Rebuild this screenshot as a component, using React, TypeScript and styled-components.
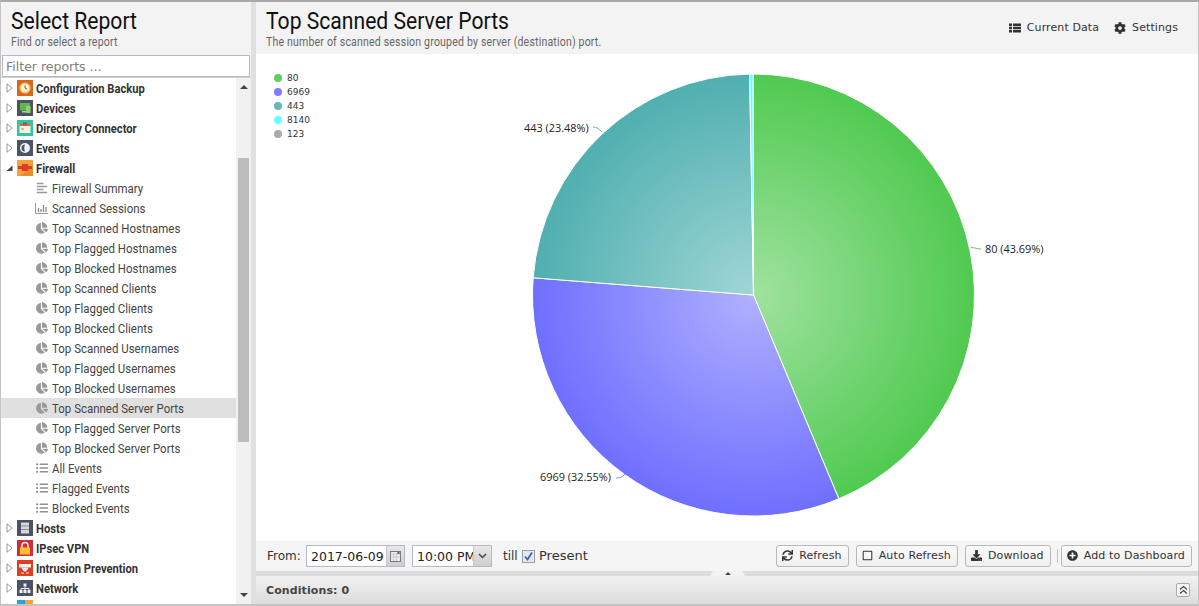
import React from "react";
import styled, { createGlobalStyle } from "styled-components";
import {
  FaChartPie,
  FaListUl,
  FaAlignLeft,
  FaSync,
  FaRegSquare,
  FaDownload,
  FaPlusCircle,
  FaCog,
} from "react-icons/fa";

const GlobalStyle = createGlobalStyle`
  html, body {
    margin: 0;
    padding: 0;
    overflow: hidden;
    background: #fff;
    font-family: "DejaVu Sans", sans-serif;
  }
`;

type LeafKind = "summary" | "bars" | "pie" | "list";

const leaves: { label: string; kind: LeafKind; selected?: boolean }[] = [
  { label: "Firewall Summary", kind: "summary" },
  { label: "Scanned Sessions", kind: "bars" },
  { label: "Top Scanned Hostnames", kind: "pie" },
  { label: "Top Flagged Hostnames", kind: "pie" },
  { label: "Top Blocked Hostnames", kind: "pie" },
  { label: "Top Scanned Clients", kind: "pie" },
  { label: "Top Flagged Clients", kind: "pie" },
  { label: "Top Blocked Clients", kind: "pie" },
  { label: "Top Scanned Usernames", kind: "pie" },
  { label: "Top Flagged Usernames", kind: "pie" },
  { label: "Top Blocked Usernames", kind: "pie" },
  { label: "Top Scanned Server Ports", kind: "pie", selected: true },
  { label: "Top Flagged Server Ports", kind: "pie" },
  { label: "Top Blocked Server Ports", kind: "pie" },
  { label: "All Events", kind: "list" },
  { label: "Flagged Events", kind: "list" },
  { label: "Blocked Events", kind: "list" },
];

// app icons of the tree groups
const GroupIcon = ({ name }: { name: string }) => {
  switch (name) {
    case "backup":
      return (
        <svg width="16" height="16" viewBox="0 0 16 16">
          <rect width="16" height="16" fill="#d9661f" />
          <circle cx="8" cy="8" r="5.6" fill="#f6c453" />
          <circle cx="8" cy="8" r="4" fill="#f7f1e3" />
          <path d="M8 5.5V8l2 1" stroke="#8a5a2b" strokeWidth="1" fill="none" />
        </svg>
      );
    case "devices":
      return (
        <svg width="16" height="16" viewBox="0 0 16 16">
          <rect width="16" height="16" fill="#4a5368" />
          <rect x="3" y="3" width="10" height="7.5" fill="#63b547" />
          <rect x="9" y="6" width="4.5" height="7" fill="#8fd16f" />
          <rect x="5" y="11" width="4" height="1.5" fill="#a9d99a" />
        </svg>
      );
    case "directory":
      return (
        <svg width="16" height="16" viewBox="0 0 16 16">
          <rect width="16" height="16" fill="#2fc6a0" />
          <rect x="2.5" y="4" width="11" height="9" fill="#f6f1e4" />
          <rect x="2.5" y="4" width="11" height="2" fill="#e2604a" />
          <rect x="6" y="2.5" width="4" height="2" fill="#7a5c4a" />
          <rect x="4.5" y="8" width="2" height="2" fill="#e8a33d" />
        </svg>
      );
    case "events":
      return (
        <svg width="16" height="16" viewBox="0 0 16 16">
          <rect width="16" height="16" fill="#4a5368" />
          <circle cx="8" cy="8" r="5" fill="#f2f2f2" />
          <path d="M8 4.5a3.5 3.5 0 0 0 0 7c-1-2-1-5 0-7z" fill="#4a5368" />
        </svg>
      );
    case "firewall":
      return (
        <svg width="16" height="16" viewBox="0 0 16 16">
          <rect width="16" height="16" fill="#f2a33c" />
          <path d="M16 16H4L16 4z" fill="#e58f2c" />
          <rect x="1" y="6" width="14" height="3" fill="#d8402c" />
          <rect x="5" y="4" width="6" height="7" fill="#d8402c" />
        </svg>
      );
    case "hosts":
      return (
        <svg width="16" height="16" viewBox="0 0 16 16">
          <rect width="16" height="16" fill="#4a5368" />
          <rect x="4" y="2.5" width="8" height="11" fill="#d8d8d8" />
          <path d="M4 6h8M4 9.5h8" stroke="#8b8f99" strokeWidth="1" />
        </svg>
      );
    case "ipsec":
      return (
        <svg width="16" height="16" viewBox="0 0 16 16">
          <rect width="16" height="16" fill="#d42c3a" />
          <path d="M5 8V5.5a3 3 0 0 1 6 0V8" stroke="#f2f2f2" strokeWidth="1.4" fill="none" />
          <rect x="3" y="7.5" width="10" height="7" fill="#f4c430" />
        </svg>
      );
    case "intrusion":
      return (
        <svg width="16" height="16" viewBox="0 0 16 16">
          <rect width="16" height="16" fill="#dd3f22" />
          <rect x="2" y="4" width="12" height="3.5" fill="#eee" />
          <path d="M5 8h6l-2 3H7zM4 13h3M9 13h3" stroke="#eee" strokeWidth="1" fill="#eee" />
        </svg>
      );
    case "network":
      return (
        <svg width="16" height="16" viewBox="0 0 16 16">
          <rect width="16" height="16" fill="#4a5368" />
          <rect x="6.5" y="3.5" width="3" height="3" fill="#eee" />
          <rect x="2.5" y="10" width="3" height="3" fill="#eee" />
          <rect x="6.5" y="10" width="3" height="3" fill="#eee" />
          <rect x="10.5" y="10" width="3" height="3" fill="#eee" />
          <path d="M8 6.5V10M4 10V8.5h8V10" stroke="#eee" strokeWidth="1" fill="none" />
        </svg>
      );
    default:
      return (
        <svg width="16" height="16" viewBox="0 0 16 16">
          <rect width="16" height="16" fill="#2f9fd8" />
          <rect x="8" y="0" width="8" height="6" fill="#f2a33c" />
        </svg>
      );
  }
};

const ClosedArrow = () => (
  <svg width="7" height="10" viewBox="0 0 7 10">
    <path d="M1 .8 6 5 1 9.2z" fill="#fff" stroke="#9a9a9a" strokeWidth="1" />
  </svg>
);

const OpenArrow = () => (
  <svg width="7" height="10" viewBox="0 0 7 10">
    <path d="M6.5 2.5v5.500h-6z" fill="#444" />
  </svg>
);

const BarsIcon = () => (
  <svg width="13" height="12" viewBox="0 0 13 12">
    <path d="M.5 1v10.500H13" stroke="#999" strokeWidth="1" fill="none" />
    <path d="M3.500 6v4M6 7v3M8.500 3v7M11 5v5" stroke="#888" strokeWidth="1.300" />
  </svg>
);

const DataIcon = () => (
  <svg width="12" height="12" viewBox="0 0 12 12">
    <path d="M0 1.500h3v2.500H0zM4 1.500h8v2.500H4zM0 4.800h3v2.500H0zM4 4.800h8v2.500H4zM0 8.100h3v2.500H0zM4 8.100h8v2.500H4z" fill="#333" />
  </svg>
);

const LeafIcon = ({ kind }: { kind: LeafKind }) => {
  if (kind === "pie") return <FaChartPie size={12} color="#9a9a9a" />;
  if (kind === "list") return <FaListUl size={12} color="#8f8f8f" />;
  if (kind === "summary") return <FaAlignLeft size={12} color="#9a9a9a" />;
  return <BarsIcon />;
};

const groupsBefore = [
  { icon: "backup", label: "Configuration Backup" },
  { icon: "devices", label: "Devices" },
  { icon: "directory", label: "Directory Connector" },
  { icon: "events", label: "Events" },
];

const groupsAfter = [
  { icon: "hosts", label: "Hosts" },
  { icon: "ipsec", label: "IPsec VPN" },
  { icon: "intrusion", label: "Intrusion Prevention" },
  { icon: "network", label: "Network" },
  { icon: "openvpn", label: "Open VPN" },
];

// pie geometry
const CX = 753.5;
const CY = 295;
const R = 221;

const point = (pct: number, r = R) => {
  const a = (pct / 100) * Math.PI * 2;
  return `${(CX + Math.sin(a) * r).toFixed(2)} ${(CY - Math.cos(a) * r).toFixed(2)}`;
};

const wedge = (from: number, to: number) =>
  `M${CX} ${CY}L${point(from)}A${R} ${R} 0 ${to - from > 50 ? 1 : 0} 1 ${point(to)}Z`;

const slices = [
  { id: "g80", from: 0, to: 43.69, edge: "#50ca50", middle: "#a0e2a0" },
  { id: "g6969", from: 43.69, to: 76.24, edge: "#6f6fff", middle: "#b0b0ff" },
  { id: "g443", from: 76.24, to: 99.72, edge: "#50afaf", middle: "#a0d6d6" },
  { id: "g8140", from: 99.72, to: 99.98, edge: "#66ffff", middle: "#66ffff" },
  { id: "g123", from: 99.98, to: 100, edge: "#aaaaaa", middle: "#aaaaaa" },
];

const legend = [
  { label: "80", color: "#5ecf5e" },
  { label: "6969", color: "#7d7dff" },
  { label: "443", color: "#63b8b8" },
  { label: "8140", color: "#66ffff" },
  { label: "123", color: "#aaaaaa" },
];

const App = () => (
  <Page>
    <GlobalStyle />
    <LeftPanel>
      <PanelHeader>
        <Title>Select Report</Title>
        <Subtitle>Find or select a report</Subtitle>
      </PanelHeader>
      <FilterRow>
        <FilterInput placeholder="Filter reports ..." readOnly />
      </FilterRow>
      <TreeWrap>
        <Tree>
          {groupsBefore.map((g) => (
            <TreeRow key={g.label}>
              <ArrowCell>
                <ClosedArrow />
              </ArrowCell>
              <GroupIcon name={g.icon} />
              <GroupLabel>{g.label}</GroupLabel>
            </TreeRow>
          ))}
          <TreeRow>
            <ArrowCell>
              <OpenArrow />
            </ArrowCell>
            <GroupIcon name="firewall" />
            <GroupLabel>Firewall</GroupLabel>
          </TreeRow>
          {leaves.map((l) => (
            <LeafRow key={l.label} $selected={l.selected}>
              <LeafIconCell>
                <LeafIcon kind={l.kind} />
              </LeafIconCell>
              <LeafLabel>{l.label}</LeafLabel>
            </LeafRow>
          ))}
          {groupsAfter.map((g) => (
            <TreeRow key={g.label}>
              <ArrowCell>
                <ClosedArrow />
              </ArrowCell>
              <GroupIcon name={g.icon} />
              <GroupLabel>{g.label}</GroupLabel>
            </TreeRow>
          ))}
        </Tree>
        <ScrollBar>
          <ScrollArrow $up />
          <ScrollThumb />
          <ScrollArrow />
        </ScrollBar>
      </TreeWrap>
    </LeftPanel>
    <Splitter />
    <RightPanel>
      <ReportHeader>
        <div>
          <Title>Top Scanned Server Ports</Title>
          <Subtitle>The number of scanned session grouped by server (destination) port.</Subtitle>
        </div>
        <HeaderLinks>
          <HeaderLink>
            <DataIcon />
            Current Data
          </HeaderLink>
          <HeaderLink>
            <FaCog size={12} color="#333" />
            Settings
          </HeaderLink>
        </HeaderLinks>
      </ReportHeader>
      <ChartArea>
        <Legend>
          {legend.map((l) => (
            <LegendItem key={l.label}>
              <LegendDot $color={l.color} />
              {l.label}
            </LegendItem>
          ))}
        </Legend>
        <ChartSvg viewBox="256 54 942 487" width="942" height="487">
          <defs>
            {slices.map((s) => (
              <radialGradient key={s.id} id={s.id} gradientUnits="userSpaceOnUse" cx={CX} cy={CY} r={R}>
                <stop offset="0" stopColor={s.middle} />
                <stop offset="1" stopColor={s.edge} />
              </radialGradient>
            ))}
          </defs>
          {slices.map((s) => (
            <path key={s.id} d={wedge(s.from, s.to)} fill={`url(#${s.id})`} stroke="#fff" strokeWidth="1" />
          ))}
          <path d="M971 247.500C975 247.500 977 249 981 249" stroke="#5ecf5e" fill="none" />
          <path d="M593 127C597 127 599 129 602 132" stroke="#63b8b8" fill="none" />
          <path d="M616 478C620 478 623 477 625 474" stroke="#8d8dff" fill="none" />
          <PieLabel x="985" y="253">80 (43.69%)</PieLabel>
          <PieLabel x="524" y="132">443 (23.48%)</PieLabel>
          <PieLabel x="540" y="481">6969 (32.55%)</PieLabel>
        </ChartSvg>
      </ChartArea>
      <Toolbar>
        <FromLabel>From:</FromLabel>
        <Field $width={99}>
          <FieldInput value="2017-06-09" readOnly />
          <Trigger>
            <svg width="11" height="11" viewBox="0 0 11 11">
              <rect x=".5" y=".5" width="10" height="10" fill="#eee" stroke="#777" />
              <path d="M.5 3h10M3.500 3v7M6.500 3v7M.5 6h10" stroke="#bbb" strokeWidth=".7" />
              <rect x="7.500" y="1" width="2" height="2" fill="#555" />
            </svg>
          </Trigger>
        </Field>
        <Field $width={80}>
          <FieldInput value="10:00 PM" readOnly />
          <Trigger>
            <svg width="9" height="6" viewBox="0 0 9 6">
              <path d="M1 1l3.500 3.500L8 1" stroke="#444" strokeWidth="1.500" fill="none" />
            </svg>
          </Trigger>
        </Field>
        <TillLabel>till</TillLabel>
        <CheckBox>
          <svg width="9" height="9" viewBox="0 0 9 9">
            <path d="M1 4.500l2.500 3L8 .5" stroke="#3f62b0" strokeWidth="1.800" fill="none" />
          </svg>
        </CheckBox>
        <PresentLabel>Present</PresentLabel>
        <ToolbarButtons>
          <ToolButton>
            <FaSync size={11} color="#333" />
            Refresh
          </ToolButton>
          <ToolButton>
            <FaRegSquare size={11} color="#333" />
            Auto Refresh
          </ToolButton>
          <ToolButton>
            <FaDownload size={11} color="#333" />
            Download
          </ToolButton>
          <ToolSeparator />
          <ToolButton>
            <FaPlusCircle size={11} color="#333" />
            Add to Dashboard
          </ToolButton>
        </ToolbarButtons>
      </Toolbar>
      <BottomSplitter>
        <SplitTab />
      </BottomSplitter>
      <Conditions>
        <ConditionsTitle>Conditions: 0</ConditionsTitle>
        <CollapseButton>
          <svg width="9" height="10" viewBox="0 0 9 10">
            <path d="M1 4.500l3.500-3 3.500 3M1 8.500l3.500-3 3.500 3" stroke="#444" strokeWidth="1.200" fill="none" />
          </svg>
        </CollapseButton>
      </Conditions>
    </RightPanel>
  </Page>
);

const Page = styled.div`
  display: flex;
  width: 1199px;
  height: 606px;
  box-sizing: border-box;
  border-top: 2px solid #a9a9a9;
  border-bottom: 2px solid #c4c4c4;
  border-left: 1px solid #c4c4c4;
  border-right: 1px solid #c4c4c4;
  overflow: hidden;
`;

const LeftPanel = styled.div`
  display: flex;
  flex-direction: column;
  width: 250px;
  flex: none;
`;

const PanelHeader = styled.div`
  height: 52px;
  box-sizing: border-box;
  padding: 5px 0 0 10px;
  background: #f3f3f3;
`;

const Title = styled.div`
  font-family: Roboto, sans-serif;
  font-size: 24px;
  line-height: 28px;
  color: #111;
  transform: scaleX(0.88);
  transform-origin: left;
  white-space: nowrap;
`;

const Subtitle = styled.div`
  font-family: Roboto, sans-serif;
  font-size: 12px;
  line-height: 14px;
  letter-spacing: 0.2px;
  color: #666;
  transform: scaleX(0.88);
  transform-origin: left;
  white-space: nowrap;
`;

const FilterRow = styled.div`
  height: 24px;
  box-sizing: border-box;
  padding: 1px 1px 0 1px;
  background: #f3f3f3;
  border-bottom: 1px solid #d0d0d0;
`;

const FilterInput = styled.input`
  display: block;
  width: 100%;
  height: 22px;
  box-sizing: border-box;
  border: 1px solid #b5b8c8;
  padding: 0 3px;
  outline: none;
  background: #fff;
  font-family: "DejaVu Sans", sans-serif;
  font-size: 12.500px;
  &::placeholder {
    color: #808080;
    opacity: 1;
  }
`;

const TreeWrap = styled.div`
  flex: 1;
  min-height: 0;
  display: flex;
  background: #fff;
`;

const Tree = styled.div`
  flex: 1;
  min-width: 0;
  overflow: hidden;
`;

const TreeRow = styled.div`
  display: flex;
  align-items: center;
  height: 20px;
`;

const ArrowCell = styled.div`
  display: flex;
  justify-content: center;
  width: 16px;
`;

const GroupLabel = styled.span`
  margin-left: 3px;
  font-family: Roboto, sans-serif;
  font-size: 13px;
  font-weight: 700;
  color: #333;
  transform: scaleX(0.86);
  transform-origin: left;
  white-space: nowrap;
`;

const LeafRow = styled.div<{ $selected?: boolean }>`
  display: flex;
  align-items: center;
  height: 20px;
  padding-left: 34px;
  background: ${({ $selected }) => ($selected ? "#e0e0e0" : "transparent")};
`;

const LeafIconCell = styled.div`
  display: flex;
  justify-content: center;
  width: 13px;
`;

const LeafLabel = styled.span`
  margin-left: 4px;
  font-family: Roboto, sans-serif;
  font-size: 13px;
  letter-spacing: 0.02px;
  color: #444;
  transform: scaleX(0.88);
  transform-origin: left;
  white-space: nowrap;
`;

const ScrollBar = styled.div`
  width: 15px;
  flex: none;
  display: flex;
  flex-direction: column;
  background: #f1f1f1;
`;

const ScrollArrow = styled.div<{ $up?: boolean }>`
  height: 18px;
  flex: none;
  display: flex;
  align-items: center;
  justify-content: center;
  &::after {
    content: "";
    border-left: 4px solid transparent;
    border-right: 4px solid transparent;
    ${({ $up }) => ($up ? "border-bottom: 4px solid #444;" : "border-top: 4px solid #444;")}
  }
`;

const ScrollThumb = styled.div`
  height: 284px;
  margin: 62px 2px auto 2px;
  background: #bcbcbc;
`;

const Splitter = styled.div`
  width: 5px;
  flex: none;
  background: #e0e0e0;
`;

const RightPanel = styled.div`
  flex: 1;
  min-width: 0;
  display: flex;
  flex-direction: column;
`;

const ReportHeader = styled.div`
  height: 52px;
  box-sizing: border-box;
  padding: 5px 20px 0 10px;
  background: #f3f3f3;
  display: flex;
  justify-content: space-between;
`;

const HeaderLinks = styled.div`
  display: flex;
  gap: 15px;
  padding-top: 14px;
  align-items: flex-start;
`;

const HeaderLink = styled.div`
  display: flex;
  align-items: center;
  gap: 6px;
  font-size: 11px;
  line-height: 13px;
  letter-spacing: 0.1px;
  color: #333;
`;

const ChartArea = styled.div`
  position: relative;
  height: 487px;
  flex: none;
  background: #fff;
`;

const ChartSvg = styled.svg`
  display: block;
`;

const PieLabel = styled.text`
  font-family: "Open Sans", sans-serif;
  font-size: 10.900px;
  fill: #222;
`;

const Legend = styled.div`
  position: absolute;
  left: 18px;
  top: 17px;
`;

const LegendItem = styled.div`
  display: flex;
  align-items: center;
  height: 14px;
  font-size: 9px;
  color: #333;
`;

const LegendDot = styled.span<{ $color: string }>`
  width: 8px;
  height: 8px;
  margin-right: 5px;
  border-radius: 50%;
  background: ${({ $color }) => $color};
`;

const Toolbar = styled.div`
  height: 30px;
  flex: none;
  box-sizing: border-box;
  padding-left: 11px;
  display: flex;
  align-items: center;
  background: #f5f5f5;
`;

const FromLabel = styled.span`
  width: 39px;
  font-size: 12px;
  color: #333;
`;

const Field = styled.div<{ $width: number }>`
  display: flex;
  width: ${({ $width }) => $width}px;
  height: 22px;
  margin-right: 7px;
  box-sizing: border-box;
  border: 1px solid #b5b8c8;
  background: #fff;
`;

const FieldInput = styled.input`
  flex: 1;
  min-width: 0;
  border: 0;
  outline: none;
  padding: 0 0 0 3px;
  background: transparent;
  font-family: "DejaVu Sans", sans-serif;
  font-size: 12.500px;
  color: #222;
  text-indent: 1px;
`;

const Trigger = styled.div`
  width: 17px;
  flex: none;
  display: flex;
  align-items: center;
  justify-content: center;
  background: linear-gradient(#e8e8e8, #cfcfcf);
  border-left: 1px solid #c4c7d4;
`;

const TillLabel = styled.span`
  margin-left: 4px;
  margin-bottom: 1px;
  width: 19px;
  font-size: 12px;
  color: #333;
`;

const CheckBox = styled.div`
  width: 13px;
  height: 13px;
  box-sizing: border-box;
  border: 1px solid #9a9da8;
  background: #e4e8f2;
  display: flex;
  align-items: center;
  justify-content: center;
`;

const PresentLabel = styled.span`
  margin-left: 4px;
  margin-bottom: 1px;
  font-size: 13px;
  color: #333;
`;

const ToolbarButtons = styled.div`
  margin-left: auto;
  padding-right: 6px;
  display: flex;
  align-items: center;
  gap: 7px;
`;

const ToolButton = styled.div`
  display: flex;
  align-items: center;
  gap: 6px;
  height: 22px;
  box-sizing: border-box;
  padding: 0 6px 2px 5px;
  border: 1px solid #b8b8b8;
  border-radius: 3px;
  background: linear-gradient(#fafafa, #f0f0f0);
  font-size: 11px;
  letter-spacing: 0.14px;
  color: #333;
`;

const ToolSeparator = styled.div`
  width: 1px;
  height: 14px;
  margin: 0 -4px 0 -1px;
  background: #c8c4b4;
`;

const BottomSplitter = styled.div`
  position: relative;
  height: 5px;
  flex: none;
  background: #dcdcdc;
`;

const SplitTab = styled.div`
  position: absolute;
  left: 454px;
  top: 0;
  width: 35px;
  height: 5px;
  box-sizing: border-box;
  padding-top: 1px;
  background: #f2f2f2;
  clip-path: polygon(3px 0, 32px 0, 35px 100%, 0 100%);
  display: flex;
  justify-content: center;
  &::after {
    content: "";
    height: 0;
    border-left: 3px solid transparent;
    border-right: 3px solid transparent;
    border-bottom: 3px solid #444;
  }
`;

const Conditions = styled.div`
  flex: 1;
  min-height: 0;
  box-sizing: border-box;
  padding: 0 8px 0 10px;
  display: flex;
  align-items: center;
  justify-content: space-between;
  background: linear-gradient(#f1f1f1, #dcdcdc);
`;

const ConditionsTitle = styled.span`
  font-size: 11px;
  font-weight: 700;
  letter-spacing: 0.1px;
  color: #444;
`;

const CollapseButton = styled.div`
  width: 14px;
  height: 14px;
  box-sizing: border-box;
  border: 1px solid #aaa;
  border-radius: 2px;
  background: #f7f7f7;
  display: flex;
  align-items: center;
  justify-content: center;
`;

export default App;
